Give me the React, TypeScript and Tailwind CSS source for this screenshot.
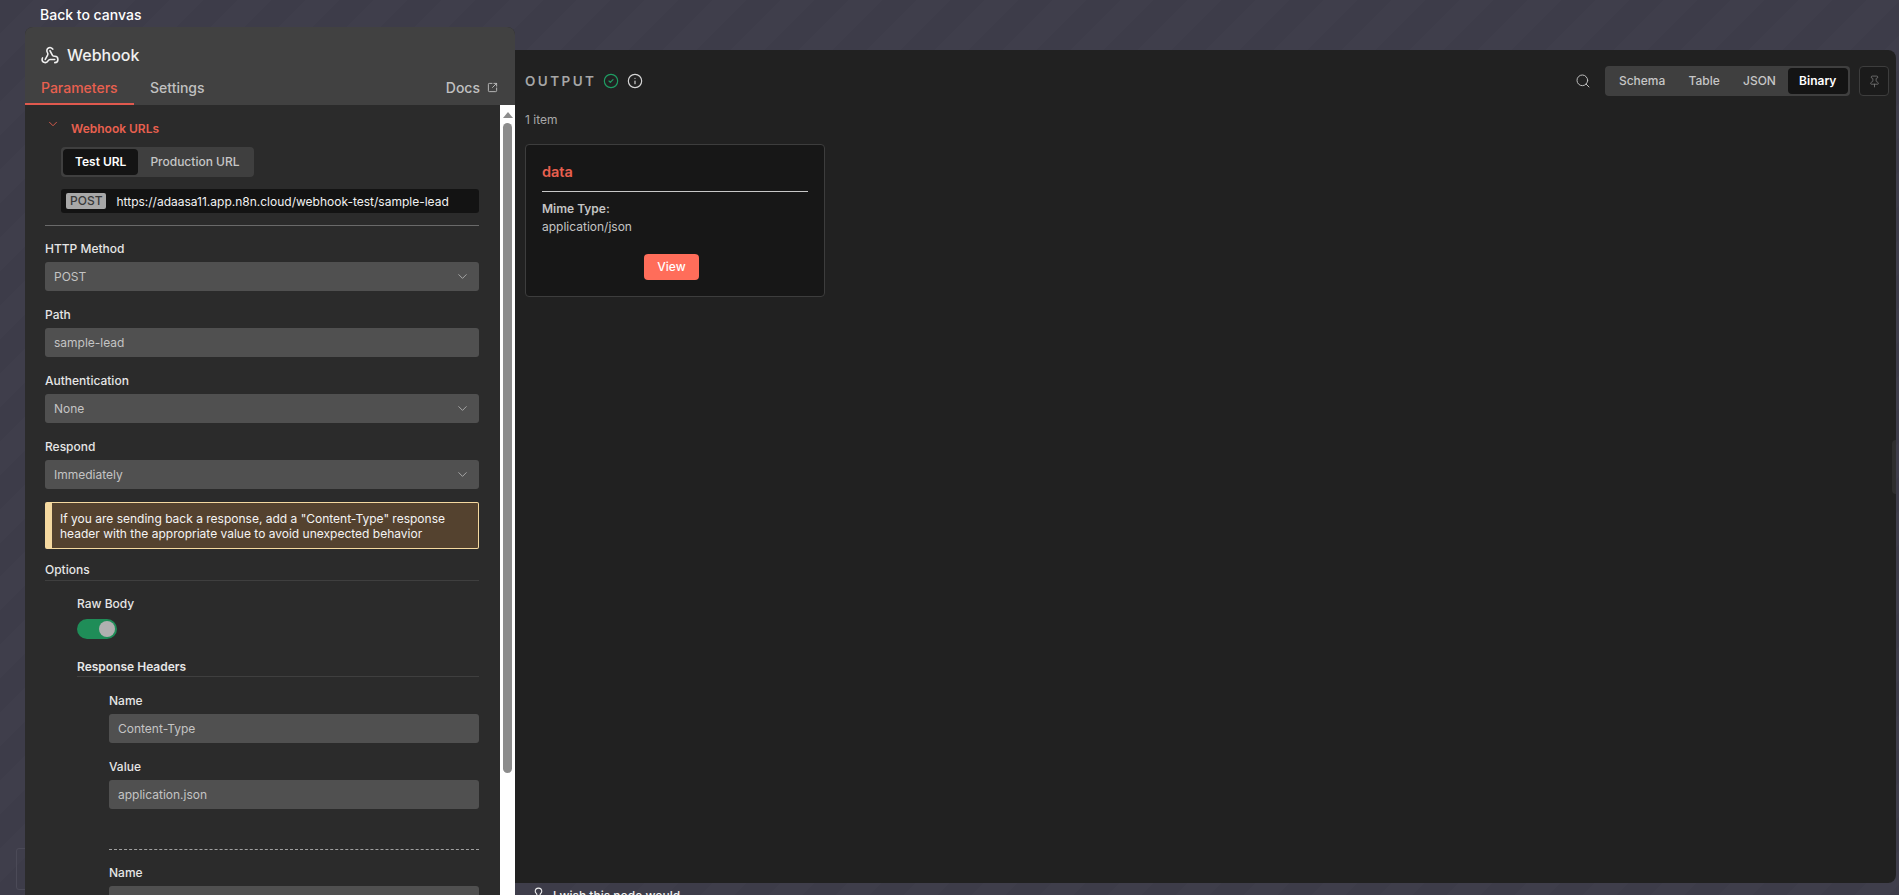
import { ChevronDown, CircleCheck, Info, Lightbulb, Pin, Search, SquareArrowOutUpRight } from "lucide-react"

const fieldClass = "flex h-[29px] items-center justify-between rounded-[3px] bg-[#505050] pl-[9px] pr-[9px] text-[12px] text-[#c4c4c4]"

const WebhookIcon = () => (
  <svg width="20" height="19" viewBox="0 0 24 24" fill="none" stroke="#f0f0f0" strokeWidth="2" strokeLinecap="round" strokeLinejoin="round">
    <path d="M18 16.98h-5.99c-1.1 0-1.95.94-2.48 1.9A4 4 0 0 1 2 17c.01-.7.2-1.4.57-2" />
    <path d="m6 17 3.13-5.78c.53-.97.1-2.18-.5-3.1a4 4 0 1 1 6.89-4.06" />
    <path d="m12 6 3.13 5.73C15.66 12.7 16.9 13 18 13a4 4 0 0 1 0 8" />
  </svg>
)

const Field = ({ label, value, select, nested }: { label: string; value: string; select?: boolean; nested?: boolean }) => (
  <div>
    <div className={nested
      ? "flex h-[20px] items-center pb-[1px] text-[12px] font-medium text-[#e6e6e6]"
      : "flex h-[19px] items-center pb-[2px] text-[12px] font-medium text-[#e6e6e6]"}
    >
      {label}
    </div>
    <div className={`${fieldClass} mt-[3px]`}>
      <span>{value}</span>
      {select && <ChevronDown size={15} strokeWidth={1.25} className="text-[#bdbdbd]" />}
    </div>
  </div>
)

const Segmented = ({ items, active, tight }: { items: string[]; active: string; tight?: boolean }) => (
  <div className="flex h-[30px] items-center rounded-[4px] bg-[#3f3f3f] p-[2px]">
    {items.map((item) => (
      <div
        key={item}
        className={`flex h-[26px] items-center text-[12px] ${tight ? "px-[11.6px]" : "px-[12px]"} ${item === active
          ? "rounded-[4px] bg-[#141414] font-semibold text-white"
          : "font-medium text-[#c6c6c6]"}`}
      >
        {item}
      </div>
    ))}
  </div>
)

const ParametersPanel = () => (
  <div className="flex w-[490px] shrink-0 flex-col overflow-hidden rounded-t-[8px] bg-[#2b2b2b]">
    <div className="h-[78px] shrink-0 bg-[#414141]">
      <div className="flex h-[49px] items-center gap-[7px] pl-[15px] pt-[7px]">
        <WebhookIcon />
        <span className="text-[16px] leading-[22px] font-medium text-[#f0f0f0]">Webhook</span>
      </div>
      <div className="flex h-[29px] items-start text-[14px] font-medium">
        <div className="flex h-[29px] w-[109px] items-start border-b-2 border-[#e0594e] pl-[16px] pt-[1px] text-[#e8604f]">Parameters</div>
        <div className="pl-[16px] pt-[1px] text-[#c0c0c0]">Settings</div>
        <div className="ml-auto flex items-center gap-[7px] pr-[17px] pt-[1px] text-[#c0c0c0]">
          Docs
          <SquareArrowOutUpRight size={11} />
        </div>
      </div>
    </div>

    <div className="flex min-h-0 flex-1">
      <div className="min-w-0 flex-1 overflow-hidden pl-[20px] pr-[21px]">
        <div className="mt-[16px] flex h-[16px] items-center text-[12px] font-semibold text-[#e8604f]">
          <ChevronDown size={14} strokeWidth={1.5} className="ml-[1px] -mt-[10px]" />
          <span className="ml-[11px]">Webhook URLs</span>
        </div>
        <div className="ml-[16px] mt-[10px] w-fit">
          <Segmented items={["Test URL", "Production URL"]} active="Test URL" />
        </div>
        <div className="ml-[16px] mt-[12px] flex h-[24px] items-center rounded-[3px] bg-[#131313] pl-[5px] text-[12px] text-[#f2f2f2]">
          <span className="mr-[10px] rounded-[2px] bg-[#a8a8a8] px-[4px] text-[12px] leading-[16px] font-medium text-[#3a3a3a]">POST</span>
          <span className="mt-[2px]">https://adaasa11.app.n8n.cloud/webhook-test/sample-lead</span>
        </div>
        <div className="mt-[12px] h-px bg-[#6a6a6a]" />

        <div className="mt-[14px] flex flex-col gap-[15px]">
          <Field label="HTTP Method" value="POST" select />
          <Field label="Path" value="sample-lead" />
          <Field label="Authentication" value="None" select />
          <Field label="Respond" value="Immediately" select />
        </div>

        <div className="mt-[13px] flex h-[47px] items-center rounded-[2px] border border-l-[7px] border-[#f5d9a0] bg-[#54422f] pl-[8px] pt-[1px] text-[12px] leading-[15px] text-[#f4f4f4]">
          <p>If you are sending back a response, add a "Content-Type" response<br />header with the appropriate value to avoid unexpected behavior</p>
        </div>

        <div className="mt-[12px] flex h-[19px] items-center pb-[2px] text-[12px] font-medium text-[#e6e6e6]">Options</div>
        <div className="h-px bg-[#3f3f3f]" />

        <div className="pl-[32px]">
          <div className="mt-[14px] flex h-[19px] items-center pb-[2px] text-[12px] font-medium text-[#e6e6e6]">Raw Body</div>
          <div className="mt-[5px] flex h-[20px] w-[40px] items-center justify-end rounded-full bg-[#1f8d58] pr-[2px]">
            <div className="size-[16px] rounded-full bg-[#b0b0b0]" />
          </div>
          <div className="mt-[18px] flex h-[19px] items-center text-[12px] font-semibold text-[#e6e6e6]">Response Headers</div>
          <div className="h-px bg-[#3f3f3f]" />

          <div className="pl-[32px]">
            <div className="mt-[14px]">
              <Field nested label="Name" value="Content-Type" />
            </div>
            <div className="mt-[14px]">
              <Field nested label="Value" value="application.json" />
            </div>
            <div className="mt-[40px] border-t border-dashed border-[#a0a0a0]" />
            <div className="mt-[13px]">
              <Field nested label="Name" value="" />
            </div>
          </div>
        </div>
      </div>

      <div className="flex w-[15px] shrink-0 flex-col items-center bg-white pt-[7px]">
        <div className="h-0 w-0 border-x-[5px] border-b-[6px] border-x-transparent border-b-[#8c8c8c]" />
        <div className="mt-[5px] h-[650px] w-[9px] rounded-full bg-[#8c8c8c]" />
      </div>
    </div>
  </div>
)

const OutputPanel = () => (
  <div className="relative flex min-w-0 flex-1 flex-col">
    <div className="mt-[23px] h-[833px] rounded-r-[8px] bg-[#212121] pl-[10px] pr-[7px]">
      <div className="flex h-[62px] items-center">
        <span className="text-[13.5px] font-semibold tracking-[0.18em] text-[#a6a6a6]">OUTPUT</span>
        <CircleCheck size={16} strokeWidth={1.75} className="ml-[7px] text-[#1f9d63]" />
        <Info size={16} strokeWidth={1.75} className="ml-[8px] text-[#d6d6d6]" />
        <Search size={16} strokeWidth={1.5} className="ml-auto mr-[14px] text-[#bdbdbd]" />
        <Segmented tight items={["Schema", "Table", "JSON", "Binary"]} active="Binary" />
        <div className="ml-[9px] flex h-[30px] w-[30px] items-center justify-center rounded-[4px] border border-[#3d3d3d] bg-[#1b1b1b]">
          <Pin size={13} strokeWidth={1.5} className="text-[#7a7a7a]" />
        </div>
      </div>
      <div className="mt-[-1px] text-[12px] leading-[18px] text-[#a8a8a8]">1 item</div>
      <div className="mt-[15px] h-[153px] w-[300px] rounded-[4px] border border-[#3d3d3d] bg-[#171717] px-[16px]">
        <div className="flex h-[47px] items-center border-b border-[#c8c8c8] pt-[8px] text-[14.5px] font-semibold text-[#e8604f]">data</div>
        <div className="mt-[8px] text-[12px] leading-[18px] font-semibold text-[#c4c4c4]">Mime Type:</div>
        <div className="text-[12px] leading-[18px] text-[#c4c4c4]">application/json</div>
        <div className="mt-[18px] flex justify-center pr-[7px]">
          <div className="flex h-[26px] w-[55px] items-center justify-center rounded-[4px] bg-[#ff6d5a] text-[12px] font-medium text-white">View</div>
        </div>
      </div>
    </div>
    <div className="flex h-[12px] items-start gap-[8px] pl-[17px] pt-[6px] text-[12px] leading-[14px] font-medium text-[#f0f0f0]">
      <Lightbulb size={13} className="mt-[-2px] shrink-0" />
      I wish this node would
    </div>
    <div className="absolute right-0 top-[413px] h-[54px] w-[4px] rounded-l-[5px] bg-[#2e2e2e]" />
  </div>
)

export default function App() {
  return (
    <div className="relative h-[895px] w-[1899px] overflow-hidden bg-[#3d3c49] bg-[repeating-linear-gradient(135deg,#3d3c49_0px,#3d3c49_24px,#3f3e4b_24px,#3f3e4b_48px)] font-['Inter',sans-serif]">
      {/* canvas node showing behind the panel */}
      <div className="absolute left-[16px] top-[848px] h-[42px] w-[14px] rounded-[3px] border border-[#4b4a57]" />
      <div className="flex h-[27px] items-center pl-[40px] pt-[2px] text-[14px] font-medium text-white">Back to canvas</div>
      <div className="relative flex h-[868px] pl-[25px] pr-[3px]">
        <ParametersPanel />
        <OutputPanel />
      </div>
    </div>
  )
}
